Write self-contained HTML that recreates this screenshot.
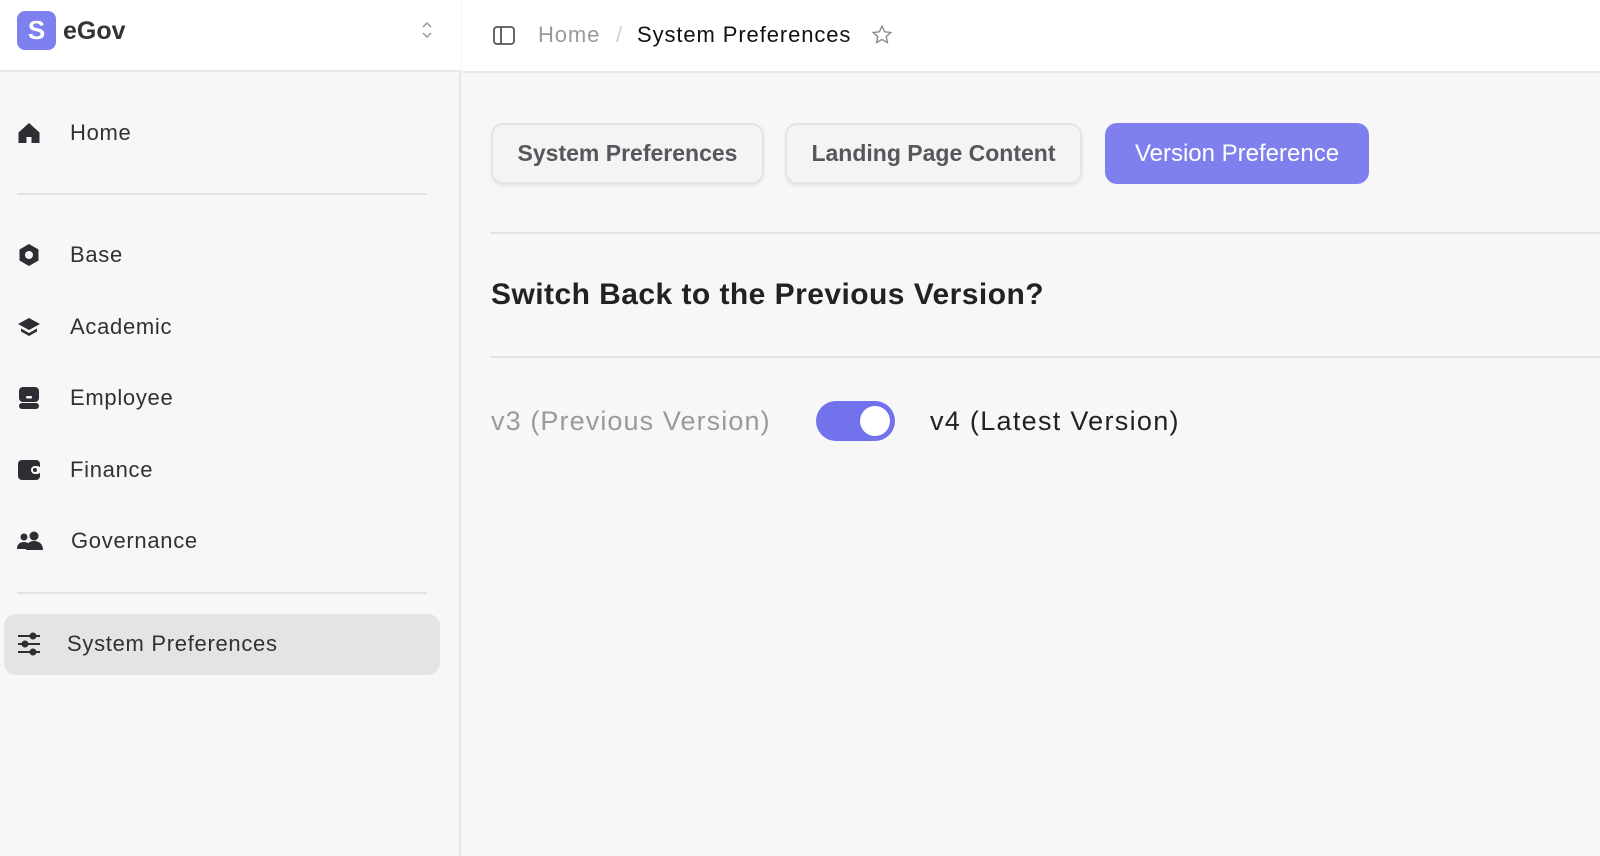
<!DOCTYPE html>
<html><head><meta charset="utf-8"><style>
*{box-sizing:border-box;margin:0;padding:0}
body{width:1600px;height:856px;overflow:hidden;background:#f7f7f7;font-family:"Liberation Sans",sans-serif;color:#2b2b31;position:relative}
.abs{position:absolute}
.side{left:0;top:0;width:461px;height:856px;background:#f7f7f7;border-right:2px solid #e6e6e6}
.sh{left:0;top:0;width:461px;height:72px;background:#fff;border-bottom:2px solid #e8e8e8}
.mh{left:462px;top:0;width:1138px;height:73px;background:#fff;border-bottom:2px solid #e8e8e8}
.logo{left:17px;top:11px;width:39px;height:39px;border-radius:8px;background:#7f80ef;color:#fff;font-weight:bold;font-size:26px;text-align:center;line-height:39px}
.item{left:70px;font-size:22px;color:#303036;transform:translateY(-50%);letter-spacing:0.7px}
.ic{left:17px;width:24px;height:24px;transform:translateY(-50%)}
.hr{height:2px;background:#e2e2e2}
.tab{top:123px;height:61px;border-radius:12px;font-size:23px;font-weight:bold;display:flex;align-items:center;justify-content:center}
.t0{background:#f4f4f4;border:2px solid #e4e4e4;color:#56565c;box-shadow:0 2px 3px rgba(0,0,0,.08)}
</style></head><body>
<div class="abs side"></div>
<div class="abs sh"></div>
<div class="abs mh"></div>
<div class="abs logo">S</div>
<div class="abs" style="left:63px;top:17px;font-size:25px;font-weight:bold;color:#333">eGov</div>
<svg class="abs" style="left:421px;top:21px" width="12" height="18" viewBox="0 0 12 18" fill="none" stroke="#999" stroke-width="1.5"><path d="M2 6l4-4 4 4M2 12l4 4 4-4"/></svg>

<svg class="abs" style="left:493px;top:26px" width="22" height="19" viewBox="0 0 22 19" fill="none" stroke="#555" stroke-width="1.8"><rect x="1" y="1" width="20" height="17" rx="3"/><path d="M8 1v17"/></svg>
<div class="abs" style="left:538px;top:22px;font-size:22px;color:#9a9a9a;letter-spacing:0.9px">Home</div>
<div class="abs" style="left:616px;top:22px;font-size:22px;color:#d0d0d0">/</div>
<div class="abs" style="left:637px;top:22px;font-size:22px;color:#111;letter-spacing:0.9px">System Preferences</div>
<svg class="abs" style="left:871px;top:24px" width="22" height="22" viewBox="0 0 24 24" fill="none" stroke="#888" stroke-width="1.5"><path d="M12 2.5l2.9 6 6.6.8-4.9 4.5 1.3 6.5L12 17l-5.9 3.3 1.3-6.5-4.9-4.5 6.6-.8z"/></svg>

<svg class="abs ic" style="top:133px" viewBox="0 0 24 24" fill="#2d2d33"><path d="M12 2L1.5 11.5V22h8v-6h5v6h8V11.5z"/></svg>
<div class="abs item" style="top:133px">Home</div>
<div class="abs hr" style="left:17px;top:193px;width:410px"></div>

<svg class="abs ic" style="top:255px" viewBox="0 0 24 24" fill="#2d2d33"><path d="M12 1l9.5 5.5v11L12 23l-9.5-5.5v-11z"/><circle cx="12" cy="12" r="4" fill="#f7f7f7"/></svg>
<div class="abs item" style="top:255px">Base</div>
<svg class="abs ic" style="top:327px" viewBox="0 0 24 24" fill="#2d2d33"><path d="M12 3L1 9l11 6 11-6z"/><path d="M4 13.5v3L12 21l8-4.5v-3L12 18z"/></svg>
<div class="abs item" style="top:327px">Academic</div>
<svg class="abs ic" style="top:398px" viewBox="0 0 24 24" fill="#2d2d33"><rect x="2" y="1" width="20" height="15" rx="4"/><rect x="2" y="17" width="20" height="6" rx="3"/><rect x="9" y="10" width="6" height="2.5" rx="1" fill="#f7f7f7"/></svg>
<div class="abs item" style="top:398px">Employee</div>
<svg class="abs ic" style="top:470px" viewBox="0 0 24 24" fill="#2d2d33"><rect x="1" y="2" width="22" height="20" rx="4"/><rect x="14" y="8" width="10" height="8" rx="4" fill="#f7f7f7"/><circle cx="18" cy="12" r="2"/></svg>
<div class="abs item" style="top:470px">Finance</div>
<svg class="abs ic" style="top:541px;width:27px" viewBox="0 0 27 24" fill="#2d2d33"><circle cx="7" cy="8" r="3.5"/><path d="M0 20c0-5 3-7 7-7s6 2 6 7z"/><circle cx="17" cy="7" r="4.5"/><path d="M9 21c0-6 3-9 8-9s9 3 9 9z"/></svg>
<div class="abs item" style="top:541px;left:71px">Governance</div>
<div class="abs hr" style="left:17px;top:592px;width:410px"></div>

<div class="abs" style="left:4px;top:614px;width:436px;height:61px;background:#e4e4e4;border-radius:12px"></div>
<svg class="abs ic" style="top:644px;left:17px" viewBox="0 0 24 24" fill="#2d2d33" stroke="#2d2d33" stroke-width="2"><path d="M1 4h22M1 12h22M1 20h22" stroke-width="2"/><circle cx="16" cy="4" r="2.5"/><circle cx="8" cy="12" r="2.5"/><circle cx="16" cy="20" r="2.5"/></svg>
<div class="abs item" style="top:644px;left:67px">System Preferences</div>

<div class="abs tab t0" style="left:491px;width:273px">System Preferences</div>
<div class="abs tab t0" style="left:785px;width:297px">Landing Page Content</div>
<div class="abs tab" style="left:1105px;width:264px;background:#7f80ee;color:#fff;font-weight:normal;font-size:24px">Version Preference</div>
<div class="abs hr" style="left:491px;top:232px;width:1109px"></div>
<div class="abs" style="left:491px;top:278px;font-size:30px;font-weight:bold;color:#222;letter-spacing:0.45px">Switch Back to the Previous Version?</div>
<div class="abs hr" style="left:491px;top:356px;width:1109px"></div>
<div class="abs" style="left:491px;top:406px;font-size:27px;color:#9a9a9a;letter-spacing:1.1px">v3 (Previous Version)</div>
<div class="abs" style="left:816px;top:401px;width:79px;height:40px;border-radius:20px;background:#7273ec"><div class="abs" style="right:5px;top:5px;width:30px;height:30px;border-radius:50%;background:#fff"></div></div>
<div class="abs" style="left:930px;top:406px;font-size:27px;color:#222;letter-spacing:1.3px">v4 (Latest Version)</div>
</body></html>
